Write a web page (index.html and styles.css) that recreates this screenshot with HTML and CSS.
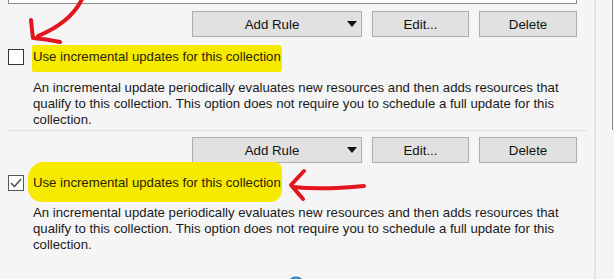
FILE: index.html
```html
<!DOCTYPE html>
<html lang="en">
<head>
  <meta charset="UTF-8">
  <meta name="viewport" content="width=device-width, initial-scale=1.0">
  <title>Collection Membership Rules</title>
  <link rel="stylesheet" href="styles.css">
</head>
<body>
<div class="window">
  <div class="main">
    <div class="list-box"></div>

    <div class="rule-block">
      <div class="rule-buttons">
        <button type="button" class="btn btn-add"><span class="btn-label">Add Rule</span><span class="caret"></span></button>
        <button type="button" class="btn btn-edit">Edit...</button>
        <button type="button" class="btn btn-delete">Delete</button>
      </div>
      <div class="check-row">
        <span class="check-box"></span>
        <span class="check-text mark-flat">Use incremental updates for this collection</span>
      </div>
      <p class="check-desc">An incremental update periodically evaluates new resources and then adds resources that qualify to this collection. This option does not require you to schedule a full update for this collection.</p>
    </div>

    <div class="rule-block last">
      <div class="rule-buttons">
        <button type="button" class="btn btn-add"><span class="btn-label">Add Rule</span><span class="caret"></span></button>
        <button type="button" class="btn btn-edit">Edit...</button>
        <button type="button" class="btn btn-delete">Delete</button>
      </div>
      <div class="check-row">
        <span class="check-box checked">
          <svg width="14" height="14" viewBox="0 0 14 14"><polyline points="2,7 5.5,10.5 12,3" fill="none" stroke="#555" stroke-width="1.6"/></svg>
        </span>
        <span class="check-text mark-blob">Use incremental updates for this collection</span>
      </div>
      <p class="check-desc">An incremental update periodically evaluates new resources and then adds resources that qualify to this collection. This option does not require you to schedule a full update for this collection.</p>
    </div>

    <div class="help-row">
      <svg width="18" height="18" viewBox="0 0 18 18"><circle cx="9" cy="9" r="7.5" fill="none" stroke="#1b7cc4" stroke-width="2"/></svg>
    </div>
  </div>

  <div class="side"><div class="side-track"></div></div>

  <!-- red pen marks drawn over the dialog -->
  <svg class="pen-marks" width="614" height="279" viewBox="0 0 614 279">
    <g fill="none" stroke="#e3151d" stroke-width="4" stroke-linecap="round" stroke-linejoin="round">
      <path d="M83 -3 Q 72 22 38 36"/>
      <path d="M31 20 Q 32 30 33 38 Q 46 39 60 42"/>
      <path d="M293 187 Q 322 190 364 186"/>
      <path d="M304 171 L 291 185 L 303 199"/>
    </g>
  </svg>
</div>
</body>
</html>
```

FILE: styles.css
```css
*{
  padding: 0;
  margin: 0;
  box-sizing: border-box;
}
body{
  background-color: #f5f5f5;
  font-family: "Liberation Sans", Arial, sans-serif;
  font-size: 13.2px;
  color: #1a1a1a;
  overflow: hidden;
}
.window{
  position: relative;
  display: flex;
  width: 614px;
  height: 279px;
  overflow: hidden;
}
.main{
  flex: 0 0 587px;
  padding-left: 8px;
}
.list-box{
  height: 4px;
  margin-right: 10px;
  background-color: #fff;
  border: 1px solid #8c8c8c;
  border-top: 0;
}
.rule-block{
  padding-top: 7px;
  padding-bottom: 2px;
  border-bottom: 1px solid #e2e2e2;
}
.rule-block.last{
  padding-top: 6px;
  border-bottom: 0;
}
.rule-buttons{
  display: flex;
  justify-content: flex-end;
  gap: 10px;
  padding-right: 10px;
}
.btn{
  display: flex;
  align-items: center;
  justify-content: center;
  height: 26px;
  font-family: "Liberation Sans", Arial, sans-serif;
  font-size: 13.3px;
  color: #111;
  background-color: #e1e1e1;
  border: 1px solid #adadad;
}
.btn-add{ width: 170px; padding-right: 4px; }
.btn-edit{ width: 97px; }
.btn-delete{ width: 98px; }
.btn-label{
  flex: 1;
  text-align: center;
  padding-left: 4px;
}
.caret{
  width: 0;
  height: 0;
  border-left: 5px solid transparent;
  border-right: 5px solid transparent;
  border-top: 6px solid #111;
}
.check-row{
  display: flex;
  align-items: center;
  gap: 9px;
  height: 20px;
  margin-top: 10px;
}
.check-box{
  display: flex;
  align-items: center;
  justify-content: center;
  width: 16px;
  height: 16px;
  background-color: #fff;
  border: 1px solid #333;
}
.check-box.checked{
  border-color: #555;
}
.check-text{
  position: relative;
  z-index: 0;
  color: #2a2200;
  line-height: 20px;
}
/* yellow highlighter strokes */
.check-text::before{
  content: "";
  position: absolute;
  z-index: -1;
  background-color: #f6ea00;
}
.mark-flat::before{
  top: -2px;
  bottom: -5px;
  left: -1px;
  right: -1px;
  border-radius: 2px 4px 3px 2px;
}
.mark-blob::before{
  top: -11px;
  bottom: -9px;
  left: -5px;
  right: -1px;
  border-radius: 16px 8px 12px 14px;
}
.check-desc{
  margin-top: 13px;
  margin-left: 25px;
  width: 545px;
  line-height: 16px;
}
.rule-block.last .check-desc{
  margin-top: 12px;
}
.help-row{
  padding: 21px 0 0 279px;
}
.help-row svg{
  display: block;
}
.side{
  flex: 1;
  margin-left: 7px;
  border-left: 2px solid #e4e4e4;
  padding-right: 1px;
}
.side-track{
  height: 130px;
  border-right: 1px solid #8a8a8a;
}
.pen-marks{
  position: absolute;
  top: 0;
  left: 0;
  pointer-events: none;
}
```
